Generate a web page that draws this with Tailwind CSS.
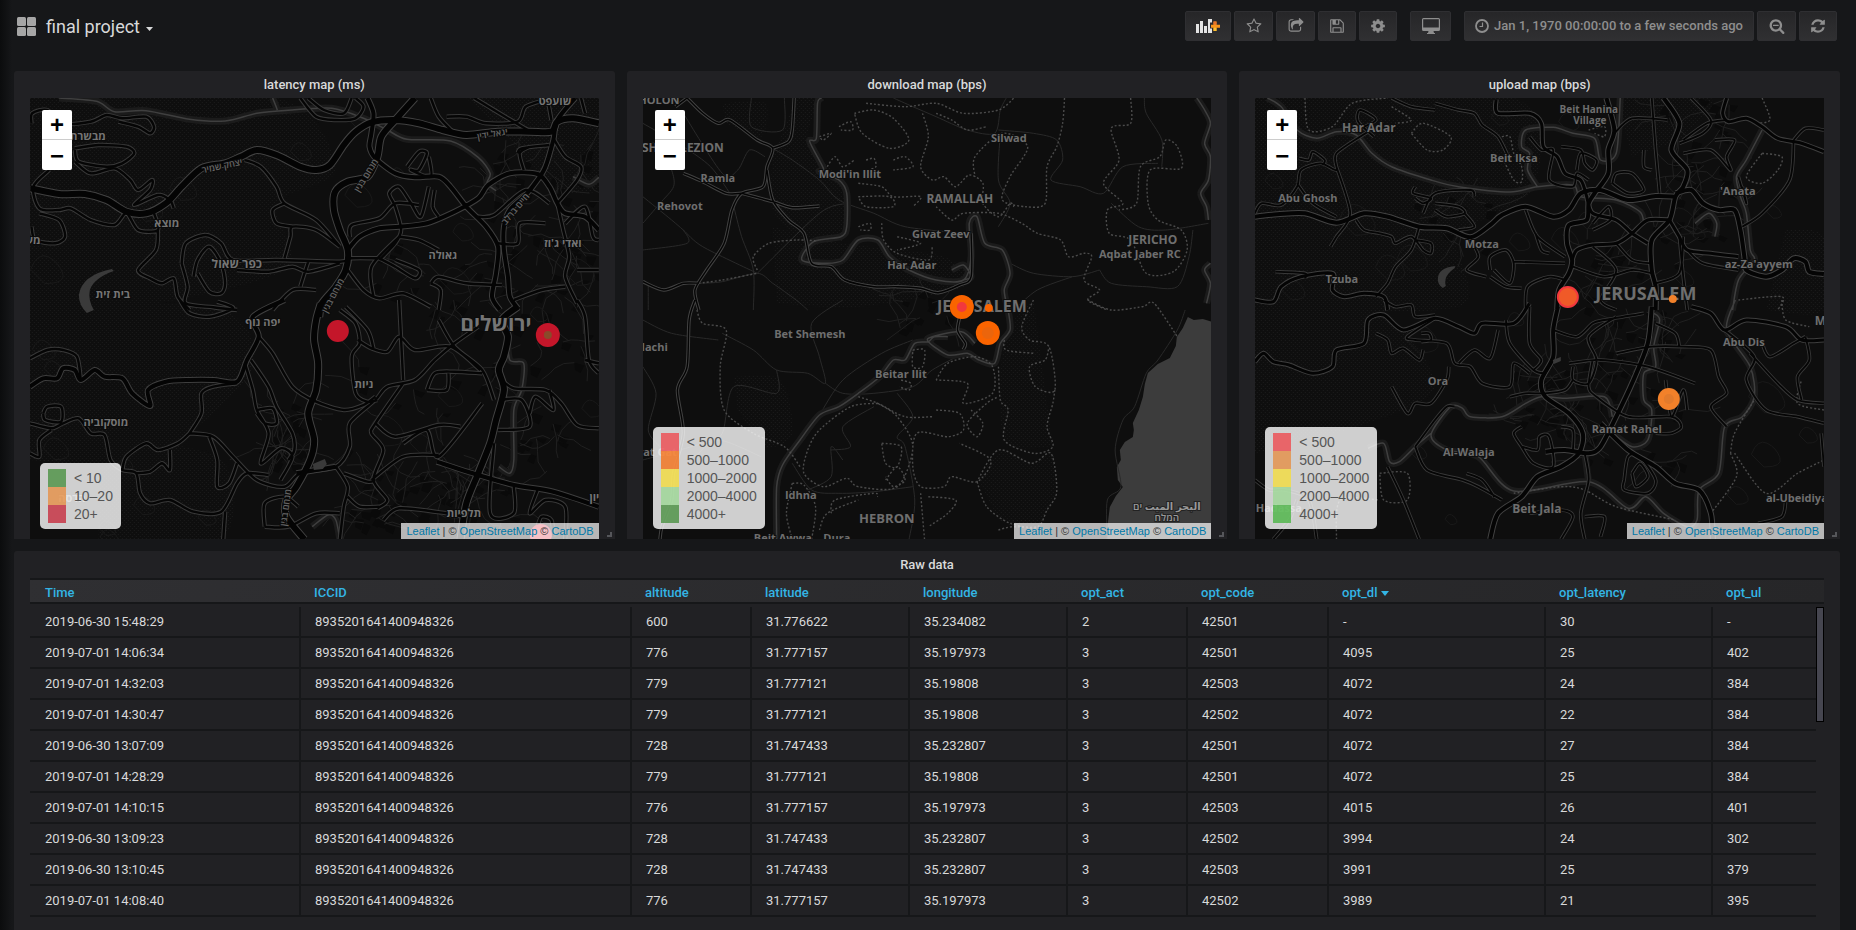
<!DOCTYPE html>
<html lang="en">
<head>
<meta charset="utf-8">
<title>final project - Grafana</title>
<script src="https://cdn.jsdelivr.net/npm/@tailwindcss/browser@4"></script>
</head>
<body class="bg-[#161719] font-['Roboto',sans-serif] text-[13px] text-[#d8d9da]">
<div class="relative flex h-screen flex-col overflow-hidden px-[14px]">
  <div class="absolute inset-y-0 left-0 w-3 bg-linear-to-r from-[#0b0c0d] to-transparent"></div>

  <header class="flex h-[71px] shrink-0 items-start justify-between pt-[11px] pr-[5px]">
    <button class="flex h-[31px] items-center gap-[10px] pl-[3px] text-[18px] leading-[32px]">
      <svg class="size-[19px]" viewBox="0 0 19 19" fill="#a6a6a6"><rect width="9" height="9" rx="1.5"/><rect x="10" width="9" height="9" rx="1.5"/><rect y="10" width="9" height="9" rx="1.5"/><rect x="10" y="10" width="9" height="9" rx="1.5"/></svg>
      <span class="flex items-center gap-[6px]">final project
        <svg class="mt-1 h-[4px] w-[7px]" viewBox="0 0 7 4" fill="#d8d9da"><path d="M0 0h7L3.500 4z"/></svg>
      </span>
    </button>
    <nav class="flex gap-[3px] text-[#8e8e8e] *:flex *:h-[30px] *:items-center *:justify-center *:rounded-[2px] *:border *:border-[#2f2f32] *:bg-linear-to-b *:from-[#262628] *:to-[#303032]">
      <button class="w-[46px]" aria-label="Add panel">
        <svg class="h-[16px] w-[26px]" viewBox="0 0 26 16"><g fill="#e3e3e3"><path d="M1 6h3v9H1zM5 3h3v12H5zM9 8h3v7H9zM13 1h4v3.500h-2v6h2V15h-4z"/></g><path d="M18.500 3.500h3v3.200H25v3h-3.500V13h-3V9.700h-2.500v-3h2.500z" fill="#f7941d"/><path d="M18.500 3.500h3v3.200h-3z" fill="#e8722a"/><path d="M18.500 9.700h3V13h-3z" fill="#fbc02d"/></svg>
      </button>
      <button class="w-[39px]" aria-label="Mark as favorite">
        <svg class="size-[16px]" viewBox="0 0 1792 1792" fill="currentColor"><path d="M1201 1004l306-297-422-62-189-382-189 382-422 62 306 297-73 421 378-199 377 199zm527-357q0 22-26 48l-363 354 86 500q1 7 1 20 0 50-41 50-19 0-40-12l-449-236-449 236q-22 12-40 12-21 0-31.500-14.500t-10.500-35.500q0-6 2-20l86-500-364-354q-25-27-25-48 0-37 56-46l502-73 225-455q19-41 49-41t49 41l225 455 502 73q56 9 56 46z"/></svg>
      </button>
      <button class="w-[39px]" aria-label="Share dashboard">
        <svg class="size-[16px]" viewBox="0 0 1792 1792" fill="currentColor"><path d="M1472 989v259q0 119-84.500 203.500t-203.500 84.500h-832q-119 0-203.500-84.500t-84.500-203.500v-832q0-119 84.500-203.500t203.500-84.500h255q13 0 22.500 9.500t9.500 22.500q0 27-26 32-77 26-133 60-10 4-16 4h-112q-66 0-113 47t-47 113v832q0 66 47 113t113 47h832q66 0 113-47t47-113v-214q0-19 18-29 28-13 54-37 16-16 35-8 21 9 21 29zm237-496l-384 384q-18 19-45 19-12 0-25-5-39-17-39-59v-192h-160q-323 0-438 131-119 137-74 473 3 23-20 34-8 2-12 2-16 0-26-13-10-14-21-31t-39.500-68.500-49.500-99.500-38.500-114-17.500-122q0-49 3.500-91t14-90 28-88 47-81.500 68.500-74 94.500-61.500 124.500-48.500 159.500-30.500 196.500-11h160v-192q0-42 39-59 13-5 25-5 26 0 45 19l384 384q19 19 19 45t-19 45z"/></svg>
      </button>
      <button class="w-[38px]" aria-label="Save dashboard">
        <svg class="size-[16px]" viewBox="0 0 1792 1792" fill="currentColor"><path d="M512 1536h768v-384h-768v384zm896 0h128v-896q0-14-10-38.500t-20-34.500l-281-281q-10-10-34-20t-39-10v416q0 40-28 68t-68 28h-576q-40 0-68-28t-28-68v-416h-128v1280h128v-416q0-40 28-68t68-28h832q40 0 68 28t28 68v416zm-384-928v-320q0-13-9.500-22.500t-22.500-9.500h-192q-13 0-22.500 9.500t-9.500 22.500v320q0 13 9.500 22.500t22.500 9.500h192q13 0 22.500-9.500t9.500-22.500zm640 32v928q0 40-28 68t-68 28h-1344q-40 0-68-28t-28-68v-1344q0-40 28-68t68-28h928q40 0 88 20t76 48l280 280q28 28 48 76t20 88z"/></svg>
      </button>
      <button class="w-[38px]" aria-label="Dashboard settings">
        <svg class="size-[16px]" viewBox="0 0 1792 1792" fill="currentColor"><path d="M1152 896q0-106-75-181t-181-75-181 75-75 181 75 181 181 75 181-75 75-181zm512-109v222q0 12-8 23t-20 13l-185 28q-19 54-39 91 35 50 107 138 10 12 10 25t-9 23q-27 37-99 108t-94 71q-12 0-26-9l-138-108q-44 23-91 38-16 136-29 186-7 28-36 28h-222q-14 0-24.500-8.500t-11.500-21.500l-28-184q-49-16-90-37l-141 107q-10 9-25 9-14 0-25-11-126-114-165-168-7-10-7-23 0-12 8-23 15-21 51-66.500t54-70.500q-27-50-41-99l-183-27q-13-2-21-12.500t-8-23.500v-222q0-12 8-23t19-13l186-28q14-46 39-92-40-57-107-138-10-12-10-24 0-10 9-23 26-36 98.500-107.500t94.500-71.500q13 0 26 10l138 107q44-23 91-38 16-136 29-186 7-28 36-28h222q14 0 24.500 8.500t11.500 21.500l28 184q49 16 90 37l142-107q9-9 24-9 13 0 25 10 129 119 165 170 7 8 7 22 0 12-8 23-15 21-51 66.500t-54 70.500q26 50 41 98l183 28q13 2 21 12.500t8 23.500z"/></svg>
      </button>
      <button class="ml-[10px] w-[41px]" aria-label="Cycle view mode">
        <svg class="h-[16px] w-[18px]" viewBox="0 0 18 16" fill="currentColor"><path fill-rule="evenodd" d="M1.500 0h15A1.500 1.500 0 0 1 18 1.500v10a1.500 1.500 0 0 1-1.500 1.500h-5l.5 2h1v1H5v-1h1l.5-2h-5A1.500 1.500 0 0 1 0 11.500v-10A1.500 1.500 0 0 1 1.500 0zM1.200 1.200v8.300h15.600V1.200z"/></svg>
      </button>
      <button class="ml-[10px] w-[290px] gap-[5px] text-[13px] font-medium">
        <svg class="size-[14px]" viewBox="0 0 14 14" fill="none" stroke="currentColor"><circle cx="7" cy="7" r="6" stroke-width="1.800"/><path d="M7.500 3.500v4H4.500" stroke-width="1.200"/></svg>
        <span>Jan 1, 1970 00:00:00 to a few seconds ago</span>
      </button>
      <button class="w-[39px]" aria-label="Zoom out">
        <svg class="size-[16px]" viewBox="0 0 1792 1792" fill="currentColor"><path d="M1088 800v64q0 13-9.500 22.500t-22.500 9.500h-576q-13 0-22.500-9.500t-9.500-22.500v-64q0-13 9.500-22.500t22.500-9.500h576q13 0 22.500 9.500t9.500 22.500zm128 32q0-185-131.500-316.500t-316.500-131.500-316.500 131.500-131.500 316.500 131.500 316.500 316.500 131.500 316.500-131.500 131.500-316.500zm512 832q0 53-37.500 90.500t-90.500 37.500q-54 0-90-38l-343-342q-179 124-399 124-143 0-273.500-55.500t-225-150-150-225-55.500-273.500 55.500-273.500 150-225 225-150 273.500-55.500 273.500 55.500 225 150 150 225 55.500 273.500q0 220-124 399l343 343q37 37 37 90z"/></svg>
      </button>
      <button class="w-[38px]" aria-label="Refresh">
        <svg class="size-[16px]" viewBox="0 0 1792 1792" fill="currentColor"><path d="M1639 1056q0 5-1 7-64 268-268 434.500t-478 166.500q-146 0-282.500-55t-243.500-157l-129 129q-19 19-45 19t-45-19-19-45v-448q0-26 19-45t45-19h448q26 0 45 19t19 45-19 45l-137 137q71 66 161 102t187 36q134 0 250-65t186-179q11-17 53-117 8-23 30-23h192q13 0 22.500 9.500t9.500 22.500zm25-800v448q0 26-19 45t-45 19h-448q-26 0-45-19t-19-45 19-45l138-138q-148-137-349-137-134 0-250 65t-186 179q-11 17-53 117-8 23-30 23h-199q-13 0-22.500-9.500t-9.500-22.500v-7q65-268 270-434.500t480-166.500q146 0 284 55.500t245 156.500l130-129q19-19 45-19t45 19 19 45z"/></svg>
      </button>
    </nav>
  </header>

  <main class="flex flex-1 flex-col gap-3 pr-[2px]">
    <div class="grid shrink-0 grid-cols-3 gap-3">

      <section class="relative rounded-t-[3px] bg-[#212124] px-4">
        <h2 class="h-[27px] text-center text-[13px] leading-[27px] font-medium">latency map (ms)</h2>
        <div class="relative h-[441px] overflow-hidden bg-[#0e0e0e]">
          <svg id="latency" class="block h-full w-full" viewBox="0 0 569 441" preserveAspectRatio="xMidYMid slice" font-family="'Open Sans','Noto Sans','DejaVu Sans',sans-serif">
            <defs><pattern id="dots" width="4" height="4" patternUnits="userSpaceOnUse"><path d="M0 0h1v1H0zM2 2h1v1H2z" fill="#1b1b1b"/></pattern></defs>
            <g class="roads"></g>
            <path d="M82 171q-30 6-33 26q0 10 8 18l7-3q-6-10-4-20q4-12 24-19z" fill="#3a3a3a"/>
            <path d="M283 366l12-5 2 5-4 5-9 1z" fill="#3a3a3a"/>
            <g fill="#757575" font-size="11" font-weight="700" text-anchor="middle" stroke="#0b0b0b" stroke-width="2" paint-order="stroke" direction="rtl">
              <text x="525" y="7">שועפט</text><text x="58" y="42">מבשרת</text><text x="0" y="146">מעוז</text><text x="137" y="129">מוצא</text>
              <text x="207" y="170" font-size="12">כפר שאול</text><text x="413" y="161">גאולה</text><text x="533" y="149">ואדי ג'וז</text><text x="83" y="200">בית זית</text>
              <text x="233" y="228">יפה נוף</text><text x="466" y="233" font-size="21">ירושלים</text><text x="334" y="290">ניות</text><text x="76" y="328">מוסקוביה</text>
              <text x="434" y="419">תלפיות</text><text x="568" y="403">ציון</text><text x="42" y="404">הדסה</text>
              <g font-size="9" font-weight="600" fill="#666"><text transform="translate(193 71) rotate(-12)">יצחק שמיר</text><text transform="translate(339 79) rotate(-58)">מנחם בגין</text><text transform="translate(463 39) rotate(-10)">יגאל ידין</text><text transform="translate(488 113) rotate(-50)">חיים ברלב</text><text transform="translate(306 199) rotate(-62)">מנחם בגין</text><text transform="translate(259 410) rotate(-82)">מנחם בגין</text></g>
            </g>
            <circle cx="308" cy="233" r="11" fill="#c4162a"/><circle cx="518" cy="237" r="12" fill="#c4162a"/><circle cx="518" cy="237" r="4" fill="#8a4a2a"/><circle cx="511" cy="437" r="11" fill="#e02f44"/>
          </svg>
          <div class="absolute top-3 left-3 w-[30px] overflow-hidden rounded-[2px] bg-white font-['Liberation_Sans',sans-serif] text-[24px] leading-[29px] font-bold text-black">
            <button class="block h-[30px] w-full border-b border-[#ccc]" aria-label="Zoom in">+</button><button class="block h-[30px] w-full" aria-label="Zoom out map">−</button>
          </div>
          <ul class="absolute bottom-[10px] left-[10px] rounded-[5px] bg-white/80 px-2 py-[6px] font-['Liberation_Sans',sans-serif] text-[14px] leading-[18px] text-[#555] *:flex *:gap-2">
            <li><i class="size-[18px] bg-[#37872d]/70"></i>&lt; 10</li>
            <li><i class="size-[18px] bg-[#e88632]/70"></i>10–20</li>
            <li><i class="size-[18px] bg-[#c4162a]/70"></i>20+</li>
          </ul>
          <div class="absolute right-0 bottom-0 h-4 bg-white/70 px-[5px] font-['Liberation_Sans',sans-serif] text-[11px] leading-[16px] text-[#333]"><a href="#" class="text-[#0078a8]">Leaflet</a> | © <a href="#" class="text-[#0078a8]">OpenStreetMap</a> © <a href="#" class="text-[#0078a8]">CartoDB</a></div>
        </div>
        <span class="absolute right-[3px] bottom-[2px] size-[5px] border-r-2 border-b-2 border-[#55565a]"></span>
      </section>

      <section class="relative rounded-t-[3px] bg-[#212124] px-4">
        <h2 class="h-[27px] text-center text-[13px] leading-[27px] font-medium">download map (bps)</h2>
        <div class="relative h-[441px] overflow-hidden bg-[#0e0e0e]">
          <svg id="download" class="block h-full w-full" viewBox="0 0 569 441" preserveAspectRatio="xMidYMid slice" font-family="'Open Sans','Noto Sans','DejaVu Sans',sans-serif">
            <path d="M545 219L551 222 560 221 570 224V441H464L465 425 467 409 473 398 480 389 475 382 474 369 478 362 477 352 482 344 490 339 491 332 490 325 496 312 500 299 502 286 505 275 515 266 527 260 533 248 534 239 540 230z" fill="#3c3c3c"/>
            <g class="roads"></g>
            <g fill="#6e6e6e" font-size="11" font-weight="700" text-anchor="middle" stroke="#0e0e0e" stroke-width="2" paint-order="stroke">
              <text x="16" y="6">HOLON</text><text x="81" y="54" font-size="12" text-anchor="end">RISHON LEZION</text><text x="75" y="84">Ramla</text><text x="37" y="112">Rehovot</text><text x="366" y="44">Silwad</text><text x="207" y="80">Modi'in Illit</text>
              <text x="317" y="105" font-size="12">RAMALLAH</text><text x="298" y="140">Givat Zeev</text><text x="269" y="171">Har Adar</text><text x="510" y="146" font-size="12">JERICHO</text><text x="497" y="160">Aqbat Jaber RC</text>
              <text x="339" y="214" font-size="16">JERUSALEM</text><text x="167" y="240">Bet Shemesh</text><text x="258" y="280">Beitar Ilit</text><text x="25" y="253" text-anchor="end">Kiryat Malachi</text><text x="34" y="358" text-anchor="end">Kiryat Gat</text>
              <text x="158" y="401">Idhna</text><text x="244" y="425" font-size="13">HEBRON</text><text x="140" y="444">Beit Awwa</text><text x="194" y="444">Dura</text>
              <g fill="#999" stroke="#222" font-size="10" font-weight="600"><text x="524" y="412">البحر الميت ים</text><text x="524" y="423">המלח</text></g>
            </g>
            <circle cx="319" cy="209" r="12" fill="#fa6400"/><circle cx="319" cy="209" r="5" fill="#f2383d"/><circle cx="346" cy="210" r="4" fill="#fa6400"/><circle cx="345" cy="235" r="12" fill="#fa6400"/><circle cx="345" cy="235" r="6" fill="#eb650c"/>
          </svg>
          <div class="absolute top-3 left-3 w-[30px] overflow-hidden rounded-[2px] bg-white font-['Liberation_Sans',sans-serif] text-[24px] leading-[29px] font-bold text-black">
            <button class="block h-[30px] w-full border-b border-[#ccc]" aria-label="Zoom in">+</button><button class="block h-[30px] w-full" aria-label="Zoom out map">−</button>
          </div>
          <ul class="absolute bottom-[10px] left-[10px] rounded-[5px] bg-white/80 px-2 py-[6px] font-['Liberation_Sans',sans-serif] text-[14px] leading-[18px] text-[#555] *:flex *:gap-2">
            <li><i class="size-[18px] bg-[#f2383d]/70"></i>&lt; 500</li>
            <li><i class="size-[18px] bg-[#fa6400]/70"></i>500–1000</li>
            <li><i class="size-[18px] bg-[#fade2a]/70"></i>1000–2000</li>
            <li><i class="size-[18px] bg-[#96d98d]/70"></i>2000–4000</li>
            <li><i class="size-[18px] bg-[#37872d]/70"></i>4000+</li>
          </ul>
          <div class="absolute right-0 bottom-0 h-4 bg-white/70 px-[5px] font-['Liberation_Sans',sans-serif] text-[11px] leading-[16px] text-[#333]"><a href="#" class="text-[#0078a8]">Leaflet</a> | © <a href="#" class="text-[#0078a8]">OpenStreetMap</a> © <a href="#" class="text-[#0078a8]">CartoDB</a></div>
        </div>
        <span class="absolute right-[3px] bottom-[2px] size-[5px] border-r-2 border-b-2 border-[#55565a]"></span>
      </section>

      <section class="relative rounded-t-[3px] bg-[#212124] px-4">
        <h2 class="h-[27px] text-center text-[13px] leading-[27px] font-medium">upload map (bps)</h2>
        <div class="relative h-[441px] overflow-hidden bg-[#0e0e0e]">
          <svg id="upload" class="block h-full w-full" viewBox="0 0 569 441" preserveAspectRatio="xMidYMid slice" font-family="'Open Sans','Noto Sans','DejaVu Sans',sans-serif">
            <g class="roads"></g>
            <path d="M200 168q-17 2-17 13q0 6 5 9l3-2q-3-10 9-18z" fill="#3a3a3a"/><path d="M298 262l8-3v4l-7 3z" fill="#3a3a3a"/>
            <g fill="#6e6e6e" font-size="11" font-weight="700" text-anchor="middle" stroke="#0e0e0e" stroke-width="2" paint-order="stroke">
              <text x="334" y="15" font-size="10">Beit Hanina</text><text x="335" y="26" font-size="10">Village</text><text x="114" y="34" font-size="12">Har Adar</text><text x="259" y="64">Beit Iksa</text><text x="53" y="104">Abu Ghosh</text><text x="483" y="97">'Anata</text>
              <text x="227" y="150">Motza</text><text x="504" y="170">az-Za'ayyem</text><text x="87" y="185">Tzuba</text><text x="391" y="202" font-size="18">JERUSALEM</text><text x="489" y="248">Abu Dis</text><text x="560" y="227" font-size="12" text-anchor="start">Ma'ale</text>
              <text x="183" y="287">Ora</text><text x="372" y="335">Ramat Rahel</text><text x="214" y="358">Al-Walaja</text><text x="282" y="415" font-size="12">Beit Jala</text><text x="542" y="404">al-Ubeidiya</text><text x="24" y="414">Hadassa</text>
            </g>
            <circle cx="313" cy="199" r="11" fill="#f2383d"/><circle cx="313" cy="199" r="9" fill="#f05a28"/><circle cx="418" cy="201" r="4" fill="#f2812a"/><circle cx="414" cy="301" r="11" fill="#f2812a"/><circle cx="414" cy="301" r="5" fill="#e37b2c"/>
          </svg>
          <div class="absolute top-3 left-3 w-[30px] overflow-hidden rounded-[2px] bg-white font-['Liberation_Sans',sans-serif] text-[24px] leading-[29px] font-bold text-black">
            <button class="block h-[30px] w-full border-b border-[#ccc]" aria-label="Zoom in">+</button><button class="block h-[30px] w-full" aria-label="Zoom out map">−</button>
          </div>
          <ul class="absolute bottom-[10px] left-[10px] rounded-[5px] bg-white/80 px-2 py-[6px] font-['Liberation_Sans',sans-serif] text-[14px] leading-[18px] text-[#555] *:flex *:gap-2">
            <li><i class="size-[18px] bg-[#f2383d]/70"></i>&lt; 500</li>
            <li><i class="size-[18px] bg-[#e88632]/70"></i>500–1000</li>
            <li><i class="size-[18px] bg-[#fade2a]/70"></i>1000–2000</li>
            <li><i class="size-[18px] bg-[#96d98d]/70"></i>2000–4000</li>
            <li><i class="size-[18px] bg-[#37b030]/70"></i>4000+</li>
          </ul>
          <div class="absolute right-0 bottom-0 h-4 bg-white/70 px-[5px] font-['Liberation_Sans',sans-serif] text-[11px] leading-[16px] text-[#333]"><a href="#" class="text-[#0078a8]">Leaflet</a> | © <a href="#" class="text-[#0078a8]">OpenStreetMap</a> © <a href="#" class="text-[#0078a8]">CartoDB</a></div>
        </div>
        <span class="absolute right-[3px] bottom-[2px] size-[5px] border-r-2 border-b-2 border-[#55565a]"></span>
      </section>
    </div>

    <section class="flex-1 rounded-t-[3px] bg-[#212124] px-4">
      <h2 class="h-[27px] text-center text-[13px] leading-[27px] font-medium">Raw data</h2>
      <div class="relative">
        <table class="w-full table-fixed border-separate border-spacing-0 text-left">
          <colgroup><col class="w-[271px]"><col class="w-[331px]"><col class="w-[120px]"><col class="w-[158px]"><col class="w-[158px]"><col class="w-[120px]"><col class="w-[141px]"><col class="w-[217px]"><col class="w-[167px]"><col class="w-[111px]"></colgroup>
          <thead class="bg-linear-135 from-[#2f2f32] to-[#262628] text-[#33b5e5]">
            <tr class="*:h-[26px] *:border-y-2 *:border-[#161719] *:pt-1 *:pl-[13px] *:leading-[18px] *:font-medium *:first:pl-[15px]"><th>Time</th><th>ICCID</th><th>altitude</th><th>latitude</th><th>longitude</th><th>opt_act</th><th>opt_code</th><th><span class="flex items-center gap-1">opt_dl<svg class="h-[5px] w-[8px]" viewBox="0 0 8 5" fill="#33b5e5"><path d="M0 0h8L4 5z"/></svg></span></th><th>opt_latency</th><th>opt_ul</th></tr>
          </thead>
          <tbody id="rows"><tr class="h-[3px]"><td colspan="10"></td></tr></tbody>
        </table>
        <div class="absolute top-[29px] right-0 bottom-0 w-2 bg-[#212124]"><div class="h-[115px] border border-black bg-[#464650]"></div></div>
      </div>
    </section>
  </main>
</div>

<script>
const rows = [
  ['2019-06-30 15:48:29','600','31.776622','35.234082','2','42501','-','30','-'],
  ['2019-07-01 14:06:34','776','31.777157','35.197973','3','42501','4095','25','402'],
  ['2019-07-01 14:32:03','779','31.777121','35.19808','3','42503','4072','24','384'],
  ['2019-07-01 14:30:47','779','31.777121','35.19808','3','42502','4072','22','384'],
  ['2019-06-30 13:07:09','728','31.747433','35.232807','3','42501','4072','27','384'],
  ['2019-07-01 14:28:29','779','31.777121','35.19808','3','42501','4072','25','384'],
  ['2019-07-01 14:10:15','776','31.777157','35.197973','3','42503','4015','26','401'],
  ['2019-06-30 13:09:23','728','31.747433','35.232807','3','42502','3994','24','302'],
  ['2019-06-30 13:10:45','728','31.747433','35.232807','3','42503','3991','25','379'],
  ['2019-07-01 14:08:40','776','31.777157','35.197973','3','42502','3989','21','395'],
];
const body = document.getElementById('rows');
for (const r of rows) {
  const tr = document.createElement('tr');
  tr.className = '*:h-[31px] *:border-b-2 *:border-r-2 *:border-[#161719] *:pl-[14px] *:leading-[18px] *:first:pl-[15px]';
  for (const v of [r[0], '8935201641400948326', ...r.slice(1)]) {
    const td = document.createElement('td');
    td.textContent = v;
    tr.append(td);
  }
  body.append(tr);
}

// Survey sheets: x scale and left margin per map, y scale 3. The south sheet starts 690 units below the north one.
const sheets = {
  latency: { k: 2.529, x0: 76,
    area: ['n 76,84 700,84 850,300 700,400 720,600 300,720 76,720','s 76,0 560,30 640,200 480,400 330,500 76,480','s 250,400 560,480 560,718 250,718','n 1180,84 1515,84 1515,350 1400,350 1280,200'],
    border: ['n 150,84 245,94 290,125 370,122 480,148 570,153 650,130 730,121 840,115 920,145 980,180 1030,208 1140,213 1210,262 1240,310 1232,340 1255,362','n 1450,320 1490,343 1515,322','s 1283,100 1290,180 1325,190 1320,270 1300,330 1300,480 1290,520 1262,500','n 690,84 702,120','s 790,680 830,645 850,660 860,718'],
    big: ['n 78,355 150,372 215,372 270,390 320,425 370,430 420,400 460,350 510,295 570,280 610,260 650,240 700,255 760,290 800,300 835,285 870,225 900,185 940,157 1000,150 1060,160 1120,180 1180,195 1260,185 1340,185 1395,185 1410,155 1450,145 1515,160','n 1050,84 1000,150 965,200 955,260 930,320 880,335 848,365 845,420 860,480 880,540 875,600 850,650 815,700 808,740','s 812,10 800,60 795,120 805,190 800,270 780,340 795,420 785,480 750,560 725,600 725,650 770,718','s 1310,20 1270,60 1285,110 1275,170 1262,210 1275,270 1255,360 1240,430 1210,520 1180,610 1165,718'],
    mid: ['n 930,84 945,130 940,190 935,230 950,265 1000,310 1050,322 1110,320 1140,350 1180,410 1230,470 1260,530 1255,610 1245,680 1265,720','n 1455,84 1410,150 1400,210 1380,290 1360,330 1330,375 1290,420 1275,470 1275,540 1285,620 1290,680 1310,715','n 880,540 910,500 960,475 1010,470 1080,460 1150,425 1210,385 1235,345 1290,310 1360,312 1390,350 1410,400 1430,430 1480,440 1515,480','s 76,260 110,235 145,235 160,205 190,210 205,240 240,210 265,230 310,235 335,280 380,318 375,270 420,245 480,240 540,240 600,245 625,180 655,110 640,50 720,0','s 1105,485 1210,525 1300,555 1400,575 1515,620','s 750,520 850,500'],
    small: ['n 80,160 82,130 120,120 160,160 230,155 270,135 310,145 370,140 390,170 380,190 350,170 300,155','n 190,235 250,225 320,230 340,250 310,280 270,290 200,275 190,240','n 190,275 230,310 290,295 330,330 350,360 385,330 380,360 340,405 400,375 430,390 440,415','n 125,300 85,350 100,415 150,420 180,415 230,450 290,465 320,430 350,480 400,480 390,430','n 80,470 90,510 140,520 165,500 150,450 100,430','n 400,480 395,540 350,600 380,625 410,640 440,625 450,680 480,720','n 720,565 735,500 740,470 800,480 860,530','n 620,270 660,290 700,350 720,400 800,450 860,530','n 720,400 690,420 700,460 740,470','n 460,580 470,520 520,495 560,520 590,570 700,570 860,575 890,565 960,565','n 490,620 500,570 530,530 560,580 570,640 560,670 530,665 500,610','n 460,580 475,650 470,700 540,712 600,720','n 600,600 680,605 740,590 780,605 860,580','n 960,570 1000,520 1015,480 1000,410 985,370 1010,350 1040,400 1065,440 1085,350','n 885,500 890,465 960,445 1000,400 1060,405','n 1010,500 1060,510 1110,540','n 960,565 1000,590 1050,625 1060,600 1000,570','n 945,680 940,590 1010,500','n 880,600 920,660 960,685 1020,670 1090,710','n 760,84 800,140 850,150 900,145 920,110 900,84','n 780,84 820,120 870,130 890,84','n 1030,290 1060,245 1080,250 1060,300 1040,300 1090,320 1085,260','n 1090,84 1110,140 1150,190','n 1200,84 1250,120 1335,180','n 1385,84 1395,150','n 1130,140 1180,140 1230,160 1310,155 1330,110 1380,90','n 1310,250 1320,235 1390,225','n 1325,300 1315,250 1340,230','n 1400,205 1430,260 1470,290 1460,330 1410,400','n 1470,84 1480,130','n 1410,400 1425,480 1440,560 1430,620 1460,700','n 1460,600 1515,600','n 1430,460 1480,410 1500,500 1515,510','n 1210,440 1250,435 1330,360 1390,400','n 1260,520 1310,520 1315,460 1380,460','n 1090,640 1110,620 1180,640 1270,645','n 1090,640 1115,660 1110,720','n 1300,690 1370,660 1430,650','n 690,720 740,660 800,660','n 760,650 780,575','n 1100,360 1095,410 1110,440','s 455,0 480,40 530,50 590,25 550,5','s 76,175 120,150 160,150 195,170 205,240','s 76,370 130,385 160,370 200,355 230,400 265,405 280,480 310,510 345,520 355,580 380,610 430,600 490,635 560,635 600,550 625,520 680,525','s 110,340 120,320 155,320 155,365 115,360 110,340','s 130,390 100,420 100,470 76,460','s 480,400 510,340 510,280 540,260 600,250','s 480,400 450,430 400,450 370,430 320,470 310,510','s 345,520 380,515 410,490 430,510 430,450','s 480,400 540,410 590,470 650,540 720,560 760,520 850,500 885,440 885,370 950,300 980,260 1050,240 1100,180 1150,130 1210,80','s 530,410 550,480 550,560 580,550 600,490','s 655,110 690,160 740,260 800,305 870,330 920,315 950,290','s 620,190 640,270 650,330 680,400 660,490 710,445 740,470 710,540','s 650,330 690,325 700,370 670,370 650,340','s 635,180 680,260 700,320 740,400 745,450 730,480','s 860,30 900,70 910,130 890,170 900,280 930,305 955,300','s 875,20 930,90 945,145','s 905,120 940,145 980,155 1010,110 1050,150 1140,140 1215,210','s 1010,0 1020,240','s 1110,60 1150,140 1220,210 1250,300','s 1080,270 1100,220 1150,215 1220,220','s 1080,270 1130,270 1135,220','s 1220,310 1110,470 1080,390 1020,430','s 940,540 1020,470 1110,465','s 950,370 1000,410 1110,375 1165,380','s 1020,250 950,370 940,400 970,450 945,540 980,600 955,625','s 850,500 880,560 870,620 860,718','s 870,520 930,545 950,540','s 960,620 910,620 880,590','s 970,660 1010,625 1130,640 1170,650','s 570,635 565,718','s 670,680 730,680 800,640 860,640','s 670,680 670,610 720,590 755,620','s 1265,235 1300,265 1380,270 1420,310 1460,375 1515,385','s 1265,300 1320,300 1340,380 1260,390','s 1340,340 1355,290 1400,330 1390,270','s 1250,430 1240,640 1300,640 1300,560','s 1460,0 1480,50 1490,180 1515,220','s 1480,180 1515,190','s 1360,570 1340,640 1380,600 1430,620 1430,718','s 1360,680 1370,650 1395,660 1400,710'],
    city: [[880,500,600,690,11],[1180,230,330,450,9],[880,1180,420,190,10],[660,1000,120,180,5]] },
  download: { k: 2.5705, x0: 46,
    area: ['n 440,84 500,84 470,210 560,340 570,500 470,520 380,420 380,260','s 280,230 400,240 430,400 360,440 290,330','s 910,540 970,450 1050,490 1100,460 1105,580 1050,690 960,660','s 1050,0 975,120 975,420 1100,440','n 250,100 360,100 350,200 260,160','n 380,470 560,520 820,560 870,650 600,710 390,700'],
    border: ['n 505,84 495,100 492,205 475,215 510,295 500,305 550,330 570,370 570,470 555,500 485,515 455,570 520,580 560,570 600,510 650,510 680,560 730,600 800,630 870,630 890,560 885,460 905,440 925,520 970,540 990,610 975,660 985,720','n 840,600 870,585 890,620 870,630','s 985,30 990,90 965,130 950,190 910,180 880,160 830,165 780,125 790,110 865,95 900,130','s 830,110 795,110 780,125 745,130 720,180 690,180 655,230 600,280 550,320 500,345 450,420 405,495 390,560 390,718','n 1470,84 1490,120 1505,160 1490,220 1505,260 1500,330 1480,370 1495,410 1500,450','n 1505,580 1490,600 1505,640 1495,700'],
    big: ['n 160,84 200,130 240,160 270,150 340,210 380,235 365,290 355,350 300,370 275,420 255,520 210,600 180,660 190,720','n 435,84 430,180 420,215 380,235','n 150,310 200,335 260,370 300,370','n 300,370 380,395 430,413 500,408','n 365,300 380,390 420,450 460,490 480,580 530,590 565,630 640,650 700,650 760,655 805,668 860,645 890,620 890,490','n 46,635 100,660 150,640 190,640','n 160,84 130,110','s 180,0 165,60 160,200 135,270 150,400 125,520 120,600 95,680 90,718','s 865,30 855,90 875,130 870,148'],
    mid: [], small: [],
    thin: ['n 46,160 150,230 220,290 270,370','n 46,230 90,220 120,300 125,350 90,400 46,460','n 150,130 250,310 290,300 320,240 360,260','n 325,84 325,170 405,180 410,84','n 46,380 120,450 150,480 200,530 340,610','n 280,410 300,500 330,600 330,720','n 190,640 250,635 340,610 380,640 440,690 470,720','n 150,480 160,520 46,540','n 60,640 60,720','n 380,235 430,270 500,330 550,390 640,430 720,470 870,490','n 690,84 740,110 800,140 880,180 950,190 965,120 980,84','n 965,190 960,330 990,400 960,470','n 960,180 1050,190 1110,210 1125,270 1095,330 1170,350 1230,370 1280,290 1370,280','n 1335,84 1340,130 1380,210 1380,290','n 1250,400 1320,470 1390,480 1500,460','n 1220,600 1250,640 1340,650 1420,650 1450,560 1460,480','n 990,580 1050,610 1150,620 1220,600','n 1000,720 1060,660 1150,620','n 570,400 500,430 340,610','s 46,200 80,280 60,390 90,440','s 250,100 330,150 390,210 470,220 515,250 500,170 480,70 560,0','s 390,210 390,280 280,260 250,400 200,430 46,480','s 515,250 560,280 640,280 740,260 790,210 870,160','s 730,720 745,600 720,440 700,410 740,350 700,280','s 430,490 480,570 550,580 640,575 740,560','s 560,480 530,440 530,530 470,570','s 640,320 560,380 580,440 530,450','s 1440,30 1420,90 1370,180 1340,220 1310,320 1280,360 1260,450 1275,560 1240,600 1240,718','s 500,345 560,240 660,160 740,120','s 240,120 120,100 46,60','s 350,470 240,420 180,470'],
    dash: ['n 590,130 640,120 690,145 730,210 680,235 610,190 590,130','n 620,100 720,110 800,100 870,130 960,120 1000,84','n 765,130 780,200 760,290 790,330 820,320 850,350 885,315 920,340 920,400 960,440 990,400 1000,410','n 800,130 840,150 880,180 930,170','n 1130,84 1125,160 1110,230 1085,290 1080,400 1030,410 970,390 990,320 1035,230 970,190 900,260 900,320','n 1300,84 1300,160 1250,175 1270,270 1230,340 1280,400 1240,420 1245,490 1300,510 1340,610 1410,605 1445,540 1430,480 1370,450 1345,400 1350,300 1430,295 1420,230 1390,210 1375,260 1325,290 1315,400 1270,420','n 340,600 330,560 370,520 440,510 490,512','n 190,640 250,630 340,610','n 500,200 530,190 510,210 500,200','n 550,170 580,155 585,180 555,180','n 600,380 680,380 690,410 620,410 600,380','n 600,470 630,460 630,480 605,480','n 620,270 640,265 645,290 625,300','n 690,270 720,260 740,290 690,300','n 520,290 540,260 560,290 590,270','n 600,340 660,350 690,380 760,380 740,410','n 800,410 840,450 870,430 960,430 1020,460 1060,490 1120,510 1140,560 1180,550 1200,560 1180,630 1220,660 1190,690 1240,720','n 660,460 665,510 700,550 780,570 790,530','n 700,500 760,520 700,540','s 185,30 200,70 260,90 245,200 255,330 330,400 410,440 450,500','s 1190,0 1250,30 1330,20 1360,10 1420,110','s 1050,0 1020,80 1040,120 1090,140 1105,270 1055,260 1040,200 1080,180 1090,140','s 975,120 980,150 1050,160','s 650,310 580,320 500,390 470,450 460,520 510,560 570,535 600,560 700,560 740,440 700,350 650,310','s 600,290 650,310 720,350 790,350','s 740,150 770,150 765,200 740,200 740,150','s 710,240 735,250 730,270 705,260','s 800,240 830,190 900,170 945,200 945,280 870,310 880,250 800,240','s 960,200 965,300 985,330 975,420 1050,460 1100,440 1085,380 1100,310 1105,270','s 800,330 860,340 870,390 830,410 750,400 740,500 760,560 820,560 840,530 905,545 940,480 860,430','s 890,330 920,370 905,410 880,370 930,310 960,290','s 660,430 710,440 700,500 670,490 660,430','s 670,540 700,500 720,540 690,560 670,530','s 905,545 930,620 990,670 1060,680 1085,630 1110,575 1095,460 1045,490 960,450 905,545','s 430,550 460,555 490,620 480,718','s 430,550 415,640 430,718','s 530,640 540,600 640,580 650,590','s 500,690 520,640 600,600','s 760,580 770,718','s 780,590 850,600 830,640 780,680','s 960,690 1000,680 1080,690'],
    city: [[690,600,200,200,2]] },
  upload: { k: 2.5372, x0: 43,
    area: ['n 43,84 700,84 750,350 560,500 560,710 43,710','s 43,0 350,20 500,260 300,380 43,460','n 1390,480 1487,500 1487,720 1340,720','n 960,84 1200,84 1130,200 1000,260'],
    border: ['n 75,84 110,110 150,180 200,205 250,185 300,195 340,250 390,290 490,330 560,350 690,366 760,350 850,345 870,380 960,390 1020,425 1030,460','n 760,350 735,300 740,250 720,230 730,180 800,172 850,190 905,205 920,270 960,250 970,84','n 1330,180 1290,270 1265,320 1275,380 1290,430 1300,540 1310,570 1270,630 1255,720','n 1160,460 1195,430 1215,460 1210,500','s 1055,40 1070,60 1055,140 1060,200 1030,220 1030,300 1050,330 1040,420 1000,440 950,400','s 1262,0 1240,90 1300,200 1310,290 1280,350 1235,380 1220,520 1170,570 1165,660 1140,680 1080,640 1035,590 990,625 890,545 700,573 610,470 530,450 490,405 540,320 570,325 590,350 670,350 730,310 770,290 830,295 930,290 950,350','s 330,445 370,430 385,485 410,485 450,440 490,400','s 890,545 880,460'],
    big: ['n 43,440 100,433 170,430 250,458 320,430 380,440 460,470 530,475 590,502 640,465 670,435 730,410 800,440 840,420 870,370 920,360 990,390 1060,378 1110,380','n 935,84 955,180 940,240 940,310 905,370 890,400 885,450 840,465 835,520 848,570 840,610 815,660 810,720','n 1080,84 1120,160 1100,240 1140,300 1130,350 1110,380 1095,450 1050,510 1050,600 1060,650 1060,720','n 1110,370 1150,360 1180,400 1220,420 1260,420 1275,480 1285,560 1290,600 1340,620 1380,600 1410,565 1440,575 1450,605 1487,612','s 812,20 800,90 800,170 770,240 780,290 840,340 875,400 865,460 820,500 760,530 720,590 660,640 640,718','s 1050,20 1040,130 1000,250 960,350 920,440 890,460 830,450 780,455','s 920,370 990,450 1060,500 1110,550 1170,570 1200,640 1205,718'],
    mid: ['n 655,90 660,130 740,130 770,160 775,230 810,260 830,310 870,330 885,380','n 885,380 900,430 960,450 1000,490 1040,520','n 848,570 860,540 900,525 960,520 1000,490 1040,450 1100,450','n 1240,84 1230,130 1245,155 1290,145 1330,170 1370,205 1430,220 1487,245','n 1095,450 1120,500 1140,540 1200,550 1270,560','s 43,185 65,160 90,185 130,195 190,220 240,200 250,150 320,130 330,60 370,45 420,90 500,55 560,80 600,100 620,70 700,70 740,10','n 43,690 90,695 110,650 160,620 240,610 240,660 270,680 320,670 370,680 380,720','s 1150,20 1200,40 1235,90 1290,60 1390,80 1430,120 1487,120'],
    small: ['n 43,430 60,400 110,405 150,350 160,300 210,280 250,300 250,250 330,185','n 150,340 190,400 250,440','n 155,265 180,270 190,245 220,270 215,285','n 300,180 350,150 310,120 305,155 345,200','n 250,290 285,430 250,500 235,530','n 300,450 320,480 360,490 390,500 400,520 440,500 470,540 490,550 490,520 450,510','n 460,470 440,540 400,590 380,640 350,680','n 470,430 500,370 590,360 600,380','n 450,350 445,370 490,385 470,400 450,385','n 500,400 560,410 575,430 530,440 500,420','n 575,430 600,470 560,480','n 500,100 560,120 600,130 620,165 660,200 690,270','n 390,84 440,110 500,120','n 740,200 770,240 800,240 790,330 850,350 860,310 890,330','n 820,230 870,240 880,280 900,300 910,270 870,250 860,300','n 950,340 960,310 1000,310 1030,360 990,370 950,340','n 955,190 1000,145 1090,150','n 1050,84 1060,240 1070,370','n 1030,240 1030,290 1050,300','n 1120,220 1180,190 1200,150 1150,84','n 1130,250 1200,240 1250,300 1240,260 1260,210 1210,210','n 1240,150 1190,160 1130,210','n 1410,210 1400,330 1330,430 1280,470','n 1410,210 1440,175 1487,180','n 1270,320 1290,400 1280,350','n 590,510 610,560 580,600 630,620','n 640,600 640,560 680,540 700,580 690,640 650,600','n 700,575 830,580','n 640,620 680,650 720,655','n 730,420 760,500 830,560','n 755,490 770,540 790,550','n 900,460 940,410 945,450 900,480','n 900,530 960,600 920,690 960,720','n 850,590 930,620 1000,600 1050,610','n 960,520 1000,570 1050,580','n 1060,640 1120,610 1130,500','n 1120,500 1130,620 1140,720','n 1140,540 1180,580 1270,600','n 95,605 170,610 170,625','n 730,720 735,650 790,620 830,630','s 370,0 400,20 440,15 450,50 500,45','s 500,55 430,110 450,120 530,130 550,190 590,200 620,250 690,260 700,190 740,220','s 465,100 485,100 490,120 465,125','s 350,100 380,120 390,160 420,145 460,180 470,150','s 560,190 600,150 640,175 660,90','s 535,200 530,240 490,310 450,310 430,340 390,260','s 680,60 690,130 750,210 780,220','s 740,20 740,130 770,180 750,210','s 800,90 860,110 900,70 930,60 1030,40','s 850,200 850,240 890,250 910,180 890,110 960,50','s 840,190 920,180 1040,200 1160,250','s 900,180 890,260 910,290 990,350 1100,350 1125,380 1100,400 1060,400','s 960,160 1050,140 1130,140 1200,150 1220,230 1240,280 1200,320 1240,380','s 1085,240 1100,350 1130,270 1140,330','s 1060,70 1110,100 1120,140','s 450,440 500,360 530,320 550,320','s 450,440 480,510 570,540 610,560 670,600','s 580,520 620,540 650,590','s 720,380 700,400 720,440 750,490 800,500 790,410 765,410 760,450 720,440','s 980,540 990,470 1020,470 1060,540 1040,580 980,570 980,540','s 1000,520 1020,490 1040,530 1010,560 1000,520','s 880,460 890,540 870,640 880,718','s 820,380 850,390 850,450','s 690,290 730,280 780,280 830,270 850,240','s 740,640 820,630 850,650 820,718','s 880,650 930,650 920,710','s 380,500 420,600 460,718','s 1235,90 1310,170 1290,240 1340,330 1420,350 1487,370','s 1300,160 1370,250 1420,300 1487,310','s 1440,110 1450,180 1420,230 1430,300','s 1330,130 1350,170 1410,130 1440,110','s 43,540 80,570 120,570 180,600 200,718','s 90,718 130,660 150,600','s 1480,400 1487,500','s 1390,600 1380,650 1320,670','s 800,180 770,240'],
    dash: ['n 170,84 180,180 240,170 290,100 380,84','n 390,110 440,150 400,160','n 440,190 470,160 540,200 520,240 480,240 440,190','n 670,200 690,200 700,250 720,290 720,335 700,330 670,260','n 890,180 930,170 930,200 905,190','n 1330,250 1380,260 1370,300 1330,340 1290,320 1330,250','n 1330,84 1350,150 1310,160','n 1270,690 1380,680 1370,720','s 360,520 430,520 430,600 370,600 360,520','s 250,718 260,600 360,600','s 1250,460 1260,400 1310,300','s 1250,460 1265,530 1200,640','s 1260,460 1340,580 1420,520 1487,480','s 1380,0 1390,60 1450,80','s 700,580 820,560 880,570 960,620 1110,660','s 1487,330 1420,310 1430,240'],
    city: [[880,470,260,720,11],[1050,84,200,420,7],[700,900,160,200,5],[400,360,260,200,2]] },
};

const NS = 'http://www.w3.org/2000/svg';
function trace(sheet, text, close) {
  const [half, ...pts] = text.split(' ');
  const dy = half === 's' ? 690 : 0;
  const p = pts.map(t => t.split(',').map(Number)).map(([x, y]) => [(x - sheet.x0) / sheet.k, (y + dy - 84) / 3]);
  let d = 'M' + p[0].map(v => v.toFixed(1));
  for (let i = 0; i < p.length - 1; i++) {
    const a = p[i - 1] || p[i], b = p[i], c = p[i + 1], e = p[i + 2] || c;
    d += 'C' + [b[0] + (c[0] - a[0]) / 7, b[1] + (c[1] - a[1]) / 7, c[0] - (e[0] - b[0]) / 7, c[1] - (e[1] - b[1]) / 7, c[0], c[1]].map(v => v.toFixed(1));
  }
  return d + (close ? 'Z' : '');
}
function draw(parent, d, attrs) {
  const el = document.createElementNS(NS, 'path');
  el.setAttribute('d', d);
  el.setAttribute('fill', 'none');
  el.setAttribute('stroke-linejoin', 'round');
  for (const k in attrs) el.setAttribute(k, attrs[k]);
  parent.append(el);
}
let seed = 7;
const rnd = () => (seed = (seed * 16807) % 2147483647) / 2147483647;

for (const [id, s] of Object.entries(sheets)) {
  const g = document.querySelector('#' + id + ' .roads');
  const all = list => (list || []).map(t => trace(s, t)).join('');
  draw(g, s.area.map(t => trace(s, t, true)).join(''), { fill: 'url(#dots)' });

  // built-up blocks and side streets
  let blocks = '', lanes = '';
  for (const [x, y, w, h, n] of s.city) for (let i = 0; i < n * 5; i++) {
    let px = (x + rnd() * w - s.x0) / s.k, py = (y + rnd() * h - 84) / 3, a = rnd() * 6.28;
    blocks += `M${px.toFixed(1)} ${py.toFixed(1)}l${(4 + rnd() * 8).toFixed(1)} ${(rnd() * 4).toFixed(1)} ${(-2 - rnd() * 3).toFixed(1)} ${(4 + rnd() * 6).toFixed(1)} ${(-5 - rnd() * 3).toFixed(1)} -3z`;
    lanes += `M${px.toFixed(1)} ${py.toFixed(1)}`;
    for (let j = 0; j < 4; j++) {
      a += rnd() * 1.4 - .7;
      const len = 5 + rnd() * 9;
      lanes += `l${(Math.cos(a) * len).toFixed(1)} ${(Math.sin(a) * len).toFixed(1)}`;
    }
  }
  draw(g, blocks, { fill: '#0a0a0a' });
  draw(g, lanes, { stroke: '#202020', 'stroke-width': 1 });

  // hillside contours
  let hills = '';
  for (let i = 0; i < 26 && id !== 'download'; i++) {
    const cx = rnd() * 569, cy = rnd() * 441, r = 6 + rnd() * 14;
    hills += `M${(cx - r).toFixed(1)} ${cy.toFixed(1)}q${(r * .4).toFixed(1)} ${(-r).toFixed(1)} ${r.toFixed(1)} ${(-r * .7).toFixed(1)}t${(r * .8).toFixed(1)} ${(r * .9).toFixed(1)}t${(-r).toFixed(1)} ${(r * .6).toFixed(1)}z`;
  }
  draw(g, hills, { stroke: '#191919', 'stroke-width': 1 });

  draw(g, all(s.thin), { stroke: '#292929', 'stroke-width': 1 });
  draw(g, all(s.border), { stroke: '#1b1b1b', 'stroke-width': 7 });
  draw(g, all(s.border), { stroke: '#3f3f3f', 'stroke-width': 1.5 });
  draw(g, all(s.dash), { stroke: '#4b4b4b', 'stroke-width': 1.4, 'stroke-dasharray': '2 2' });
  const wide = { latency: 8, download: 3.4, upload: 6 }[id];
  const mid = { latency: 6, download: 3, upload: 5 }[id];
  draw(g, all(s.small), { stroke: '#383838', 'stroke-width': id === 'latency' ? 4.4 : 3.6 });
  draw(g, all(s.mid), { stroke: '#3e3e3e', 'stroke-width': mid });
  draw(g, all(s.big), { stroke: '#424242', 'stroke-width': wide });
  draw(g, all(s.small), { stroke: '#050505', 'stroke-width': id === 'latency' ? 2.4 : 1.8 });
  draw(g, all(s.mid), { stroke: '#040404', 'stroke-width': mid - 2 });
  draw(g, all(s.big), { stroke: '#040404', 'stroke-width': wide - 2 });
}
</script>
</body>
</html>
